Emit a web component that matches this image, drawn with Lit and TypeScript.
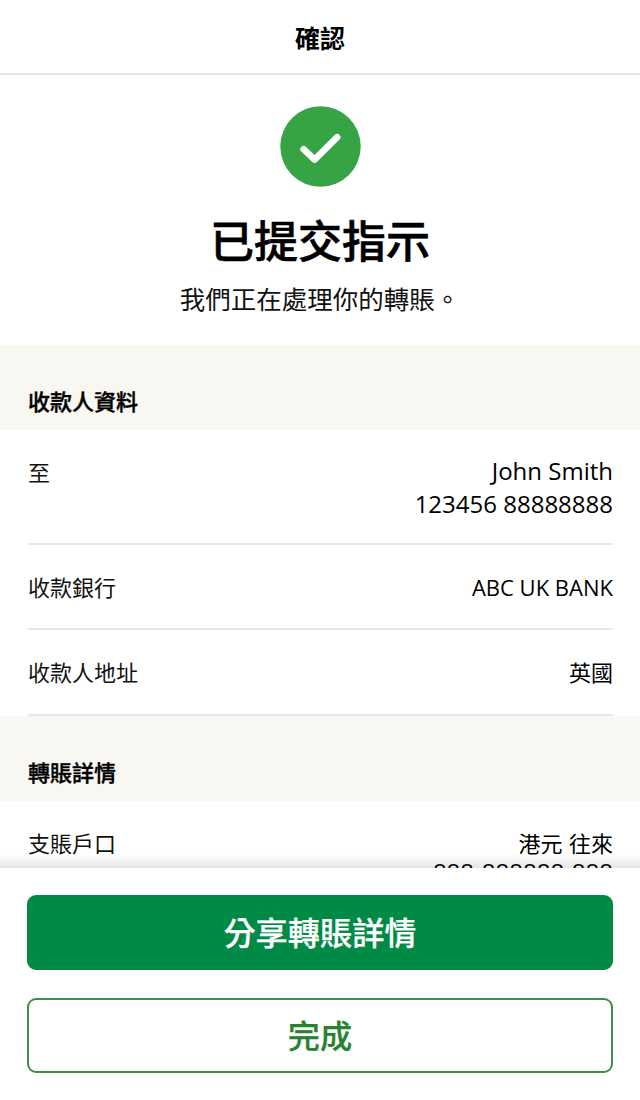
import { LitElement, html, css } from "lit";
import { customElement, property } from "lit/decorators.js";

interface Line {
  text: string;
  kind: "large" | "latin" | "cjk" | "account";
}

interface Row {
  label: string;
  size: "tall" | "regular";
  lines: Line[];
}

interface Section {
  title: string;
  rows: Row[];
}

const SECTIONS: Section[] = [
  {
    title: "收款人資料",
    rows: [
      {
        label: "至",
        size: "tall",
        lines: [
          { text: "John Smith", kind: "large" },
          { text: "123456 88888888", kind: "large" },
        ],
      },
      { label: "收款銀行", size: "regular", lines: [{ text: "ABC UK BANK", kind: "latin" }] },
      { label: "收款人地址", size: "regular", lines: [{ text: "英國", kind: "cjk" }] },
    ],
  },
  {
    title: "轉賬詳情",
    rows: [
      {
        label: "支賬戶口",
        size: "tall",
        lines: [
          { text: "港元 往來", kind: "cjk" },
          { text: "888-888888-888", kind: "account" },
        ],
      },
    ],
  },
];

@customElement("detail-row")
class DetailRow extends LitElement {
  @property({ attribute: false }) row!: Row;

  static styles = css`
    :host {
      display: block;
      padding: 0 27px 0 28px;
    }
    .row {
      display: flex;
      justify-content: space-between;
      box-sizing: border-box;
      padding-top: 25px;
      border-bottom: 2px solid #e6e6e6;
      font-size: 22px;
      line-height: 32px;
      color: #111;
    }
    .regular {
      height: 85.2px;
    }
    .tall {
      height: 115px;
    }
    .values {
      display: flex;
      flex-direction: column;
      align-items: flex-end;
      color: #000;
    }
    .value {
      white-space: nowrap;
    }
    .large,
    .latin,
    .account {
      font-family: "Open Sans", "Noto Sans", sans-serif;
    }
    .large {
      font-size: 24px;
      line-height: 33px;
    }
    .large:first-child {
      margin-top: -1px;
    }
    .latin {
      margin-top: 1px;
    }
    .cjk {
      word-spacing: 1.5px;
    }
    .account {
      font-size: 24px;
      line-height: 28px;
    }
  `;

  render() {
    return html`
      <div class="row ${this.row.size}">
        <div>${this.row.label}</div>
        <div class="values">
          ${this.row.lines.map((l) => html`<div class="value ${l.kind}">${l.text}</div>`)}
        </div>
      </div>
    `;
  }
}

@customElement("app-root")
class AppRoot extends LitElement {
  static styles = css`
    :host {
      display: flex;
      flex-direction: column;
      height: 1100px;
      overflow: hidden;
      background: #fff;
      color: #000;
      font-family: "Noto Sans CJK TC", "Noto Sans CJK HK", sans-serif;
    }
    .header {
      flex: none;
      box-sizing: border-box;
      height: 75px;
      border-bottom: 2px solid #e6e6e6;
      text-align: center;
      font-size: 25px;
      font-weight: 700;
      line-height: 74px;
    }
    .content {
      flex: 1;
      min-height: 0;
      overflow: hidden;
    }
    .hero {
      box-sizing: border-box;
      height: 270px;
      padding-top: 31px;
      display: flex;
      flex-direction: column;
      align-items: center;
    }
    .badge {
      display: block;
      width: 82px;
      height: 82px;
    }
    .title {
      margin: 19px 0 0;
      font-size: 44px;
      font-weight: 500;
      line-height: 64px;
      -webkit-text-stroke: 0.6px currentColor;
    }
    .subtitle {
      margin-top: 9px;
      font-size: 25.5px;
      line-height: 36px;
      color: #111;
    }
    .section-title {
      box-sizing: border-box;
      height: 85.3px;
      margin: 0;
      padding: 39px 28px 0;
      background: #f8f7f1;
      font-size: 22px;
      font-weight: 500;
      line-height: 32px;
      -webkit-text-stroke: 0.4px currentColor;
    }
    .footer {
      flex: none;
      position: relative;
      box-sizing: border-box;
      height: 232px;
      padding: 27px 27px 0;
      display: flex;
      flex-direction: column;
      gap: 28px;
      background: #fff;
    }
    .footer::before {
      content: "";
      position: absolute;
      left: 0;
      right: 0;
      bottom: 100%;
      height: 14px;
      background: linear-gradient(to top, rgba(0, 0, 0, 0.1), rgba(0, 0, 0, 0));
    }
    .button {
      box-sizing: border-box;
      width: 100%;
      height: 75px;
      margin: 0;
      padding: 0 0 3px;
      border: 2px solid #3a9148;
      border-radius: 9px;
      background: #fff;
      color: #26832f;
      font-family: inherit;
      font-size: 32.2px;
      font-weight: 500;
      line-height: 60px;
      text-align: center;
      -webkit-text-stroke: 0.25px currentColor;
    }
    .primary {
      border-color: #008a45;
      background: #008a45;
      color: #fff;
    }
  `;

  render() {
    return html`
      <header class="header">確認</header>
      <main class="content">
        <div class="hero">
          <svg class="badge" viewBox="0 0 82 82" aria-hidden="true">
            <circle cx="41.5" cy="40.5" r="40.2" fill="#36a445" />
            <path
              d="M24.6 43.2 35.6 53.6 58.2 31.2"
              fill="none"
              stroke="#fff"
              stroke-width="6.6"
              stroke-linecap="round"
              stroke-linejoin="round"
            />
          </svg>
          <h1 class="title">已提交指示</h1>
          <div class="subtitle">我們正在處理你的轉賬。</div>
        </div>
        ${SECTIONS.map(
          (s) => html`
            <h2 class="section-title">${s.title}</h2>
            ${s.rows.map((r) => html`<detail-row .row=${r}></detail-row>`)}
          `
        )}
      </main>
      <footer class="footer">
        <button class="button primary">分享轉賬詳情</button>
        <button class="button">完成</button>
      </footer>
    `;
  }
}
